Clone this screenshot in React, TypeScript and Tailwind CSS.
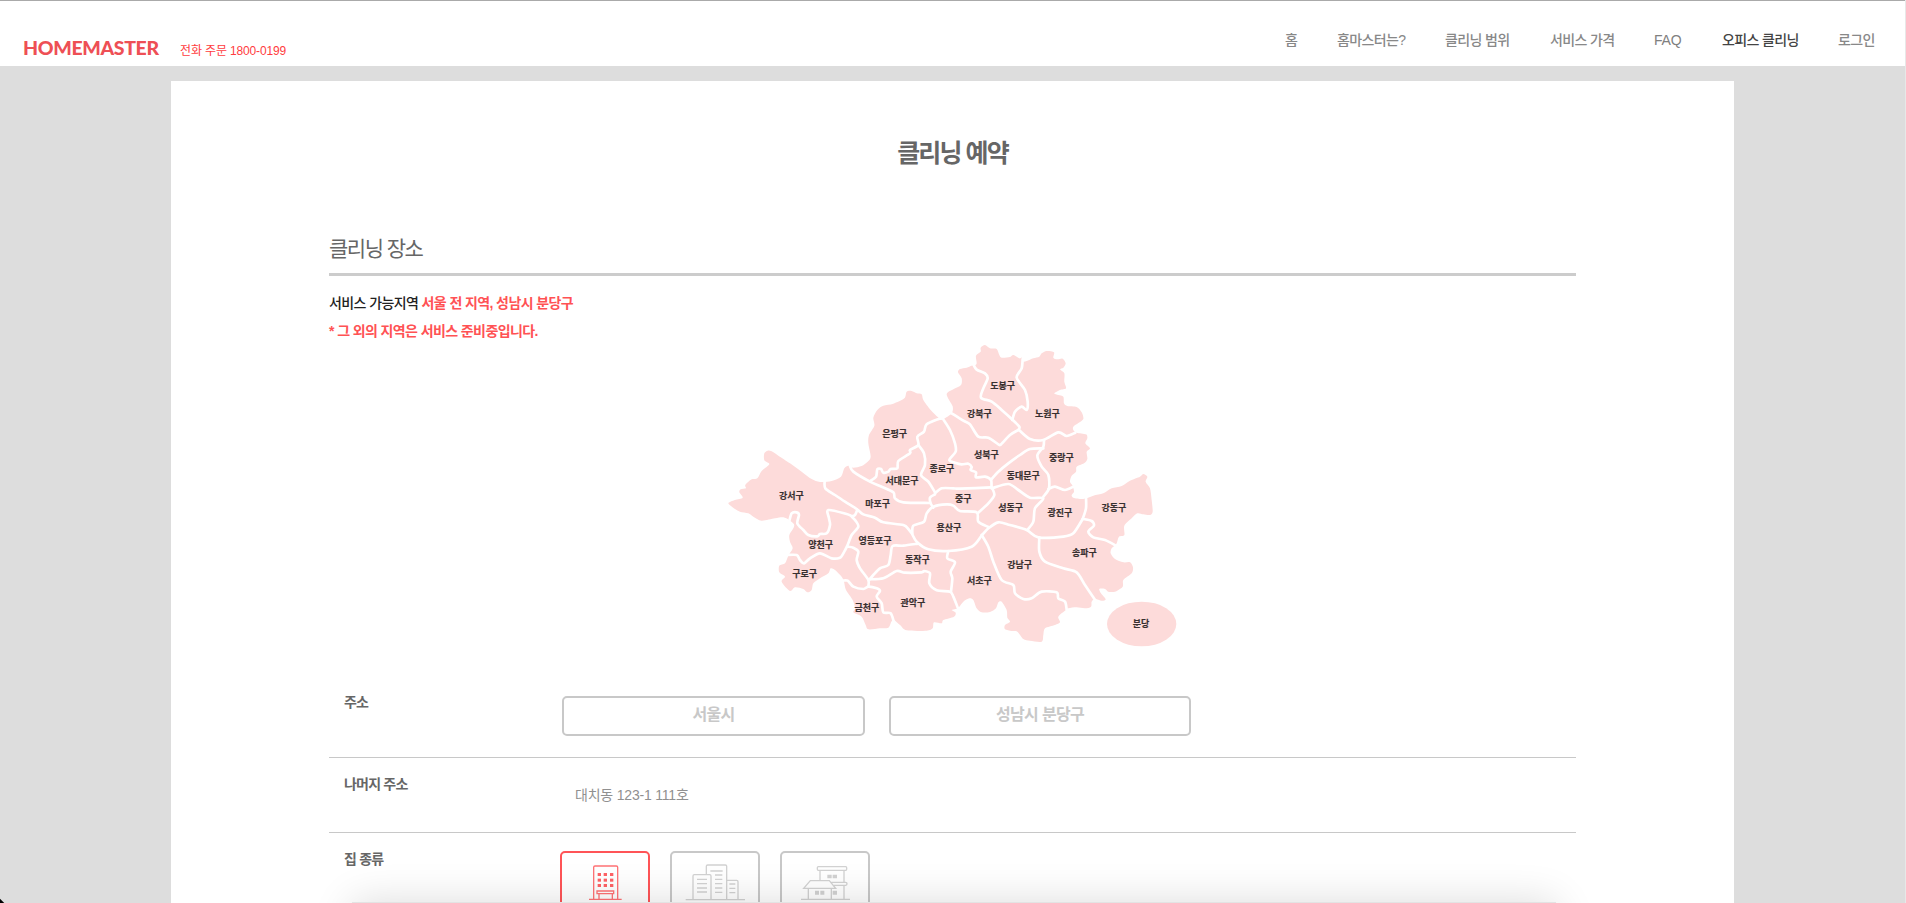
import React from "react";

type Pt = [number, number];

const parse = (s: string, dx = 0): Pt[] =>
  s.trim().split(/\s+/).map((p) => {
    const [x, y] = p.split(",").map(Number);
    return [x + dx, y];
  });

/* Catmull-Rom spline through every point */
function curve(pts: Pt[], closed = false): string {
  const n = pts.length;
  const at = (i: number) => (closed ? pts[(i + n) % n] : pts[Math.max(0, Math.min(n - 1, i))]);
  let d = `M${pts[0][0]} ${pts[0][1]}`;
  const last = closed ? n : n - 1;
  const k = 7;
  for (let i = 0; i < last; i++) {
    const a = at(i - 1), b = at(i), c = at(i + 1), e = at(i + 2);
    d += `C${b[0] + (c[0] - a[0]) / k} ${b[1] + (c[1] - a[1]) / k} ${c[0] - (e[0] - b[0]) / k} ${c[1] - (e[1] - b[1]) / k} ${c[0]} ${c[1]}`;
  }
  return closed ? d + "Z" : d;
}

const EAST = 630;

const outline: Pt[] = [
  ...parse(`25,505 45,495 68,488 58,472 62,463 78,460 76,450 95,433 112,430 125,408 148,388 133,376 133,355 143,347 155,349
  175,362 210,385 245,410 275,432 300,441 335,438 363,425 373,400 385,392 400,398 425,393 443,380 452,365 445,325 447,300
  463,272 460,248 472,225 490,212 520,206 553,190 560,170 575,168 590,175 605,178 610,195 632,225 654,247 664,254 675,250`),
  ...parse(`65,235 68,214 50,178 70,163 93,150 95,130 84,112 90,102 110,98 125,92 134,92 140,85 138,62 152,50 152,38 165,30
  180,40 200,42 208,60 215,68 240,66 250,60 268,70 276,68 280,80 290,78 310,70 328,65 335,55 350,48 372,52 370,68 382,73
  398,71 407,85 400,98 390,103 403,115 403,140 408,160 390,165 373,175 385,180 400,185 402,205 412,213 440,216 455,232
  460,252 445,264 430,275 430,285 440,293 468,298 472,310 466,325 480,340 470,350 472,372 462,385 440,395 438,410 425,422
  420,440 428,452 432,470 425,480 430,488 455,492 468,490 490,482 520,475 545,460 575,453 600,437 630,425 640,417 652,425
  647,440 660,460 665,495 668,530 660,540 640,538 622,535 605,550 583,572 583,600 567,605 560,625 553,633 545,640 542,655
  555,672 580,682 600,682 609,697 605,715 580,735 578,755 555,770 535,770 525,762 508,762 513,775 527,793 515,797 495,792
  485,800 483,815 465,820 440,817 415,820 408,825 385,845 390,862 375,870 345,880 340,900 335,920 300,917 280,912 262,890
  245,888 225,883 225,870 240,860 232,848 230,825 215,800 205,802 198,820 180,831 155,832 140,820 130,795 118,790 100,800
  88,815 80,821 65,825 77,833 72,845 40,855 35,865 12,862 8,880`, EAST),
  ...parse(`620,887 560,886 540,870 522,855 514,860 505,878 480,880 445,883 437,870 425,845 400,832 405,820 398,795 378,765
  372,740 365,725 345,705 332,700 325,715 300,730 280,745 275,765 262,772 250,762 225,757 210,768 185,740 195,725 178,712
  178,692 195,685 205,662 218,640 210,620 208,600 220,580 222,568 207,555 190,547 165,550 125,557 100,545 85,535 60,530 45,522`),
];

const borders: Pt[][] = [
  parse("314,438 316,460 345,480 375,500 410,522 430,538 465,548 490,562 550,570 565,582 575,595 590,620 625,643 685,648 755,635 785,602 805,580 835,562 870,570 920,585 955,607 1030,605 1060,595 1088,552"),
  parse("412,524 405,540 395,543 380,537 325,525 327,550 330,570 320,595 300,597 292,604 265,600 250,585 232,565 237,540 230,532 215,535 208,558"),
  parse("395,545 405,555 415,575 395,600 382,632 370,655 360,668 335,670 300,655 270,670 252,685 240,675 230,660 198,660"),
  parse("382,635 400,638 415,650 410,675 420,700 445,735 445,755"),
  parse("368,737 383,737 400,755 430,762 445,755 470,760 480,768 470,785 485,805 490,832 512,835 522,862"),
  parse("594,626 550,632 518,633 512,660 505,690 480,700 460,720 447,735"),
  parse("447,733 490,730 530,708 555,713 605,712 612,708 630,715 628,745 650,766 690,770 700,785 714,820"),
  parse("685,648 682,670 705,682 692,710 697,730 693,770"),
  parse("1088,552 1098,520 1098,486"),
  parse("460,552 485,558 492,572 475,590 490,607 525,615 558,632", EAST),
  parse("577,596 580,572 612,560 620,535 640,515 680,508 700,512 720,528 770,532 775,560 805,576"),
  parse("390,393 400,410 450,440 485,455 520,472 525,490 550,502 630,504"),
  parse("645,478 630,488 632,505 640,518"),
  parse("450,438 468,425 472,403 483,402 490,413 505,410 512,402 532,400 535,378 570,355 570,345 595,330 592,305 612,290 620,268 656,252 666,250"),
  parse("595,330 612,355 615,390 603,420 625,440 645,472"),
  parse("645,475 665,460 700,460 720,461 813,457"),
  parse("40,253 60,285 75,325 77,350 58,375 75,383 95,388 115,386 125,396 122,405 138,412 138,427 165,425 183,435 185,455 193,480 175,505 145,533", EAST),
  parse("65,235 100,257 120,268 145,305 175,308 205,328 213,328 240,300 265,285", EAST),
  parse("130,88 140,104 165,115 173,130 160,160 153,188 185,200 215,225 245,252 268,275 265,285", EAST),
  parse("278,72 275,100 260,128 285,165 293,200 290,225 275,215 255,230 247,255", EAST),
  parse("268,286 300,312 340,315 385,292 410,303 436,293", EAST),
  parse("342,315 340,335 322,362 335,395 355,420 357,460 340,485", EAST),
  parse("340,340 300,342 270,360 235,385 205,410 183,434", EAST),
  parse("185,460 235,447 265,465 300,488 340,490 315,520 310,560 292,585", EAST),
  parse("355,462 375,455 405,465 430,455", EAST),
  parse("328,608 328,650 345,680 400,700 440,712 465,750 497,797", EAST),
  parse("155,600 175,635 190,680 215,735 250,750 255,775 280,792 305,790 335,770 380,772 385,790 405,800 410,824", EAST),
];

const districts: [string, number, number][] = [
  ["도봉구", 848, 152], ["강북구", 778, 235], ["노원구", 982, 235], ["은평구", 524, 295], ["성북구", 799, 359],
  ["중랑구", 1024, 367], ["종로구", 666, 400], ["동대문구", 910, 422], ["서대문구", 546, 438], ["강서구", 214, 483],
  ["중구", 730, 491], ["마포구", 473, 507], ["성동구", 872, 519], ["강동구", 1182, 519], ["광진구", 1020, 532],
  ["용산구", 687, 579], ["영등포구", 465, 617], ["양천구", 302, 629], ["송파구", 1093, 654], ["동작구", 592, 675],
  ["강남구", 899, 689], ["구로구", 254, 717], ["서초구", 778, 737], ["관악구", 579, 803], ["금천구", 441, 817],
  ["분당", 1263, 866],
];

function DistrictMap() {
  return (
    <svg viewBox="0 0 1400 960" className="ml-[391px] block h-[320px] w-[466.67px]">
      <path d={curve(outline, true)} fill="#fddbda" />
      <g fill="none" stroke="#fff" strokeWidth="8" strokeLinejoin="round" strokeLinecap="round">
        {borders.map((b, i) => (
          <path key={i} d={curve(b)} />
        ))}
      </g>
      <ellipse cx="1265" cy="867" rx="104" ry="67" fill="#fddbda" />
      <g fill="#383030" stroke="#383030" strokeWidth="0.5" fontSize="27" fontWeight="700" textAnchor="middle">
        {districts.map(([name, x, y]) => (
          <text key={name} x={x} y={y + 10}>{name}</text>
        ))}
      </g>
    </svg>
  );
}

function ApartmentIcon() {
  return (
    <svg viewBox="786 549 258 156" className="block h-[52px] w-[86px]" fill="none" stroke="#ff7376" strokeWidth="4">
      <path d="M881 688V592q0-4 4-4h64q4 0 4 4v96M867 688h98M891 663h50v8h-50zM897 671v17M937 671v17" />
      <g fill="#ff6265" stroke="none">
        {[609, 626, 642].map((y) =>
          [893, 911, 930].map((x) => <rect key={`${x}-${y}`} x={x} y={y} width="10" height="9" />)
        )}
      </g>
    </svg>
  );
}

function OfficetelIcon() {
  return (
    <svg viewBox="1116 549 258 156" className="block h-[52px] w-[86px]" fill="none" stroke="#d2d2d2" strokeWidth="4">
      <path d="M1157 689h178M1179 688v-70q0-4 4-4h46q4 0 4 4v70M1219 612v-23q0-4 4-4h53q4 0 4 4v99M1282 631h28q4 0 4 4v53" />
      <path d="M1231 603h37M1245 615h22M1245 628h22M1245 641h22M1245 654h22M1245 667h22M1191 628h30M1191 641h30M1191 654h30M1191 666h30M1288 642h18M1288 655h18M1288 668h18" />
    </svg>
  );
}

function HouseIcon() {
  return (
    <svg viewBox="-54 549 258 156" className="block h-[52px] w-[86px]" fill="none" stroke="#d2d2d2" strokeWidth="4">
      <path d="M3 688h147M55 590h82q3 0 3 3v5q0 3-3 3H55q-3 0-3-3v-5q0-3 3-3zM60 602v30M132 602v34M11 655l20-23h57l19 23zM94 637h43q4 0 4 4t-4 5H102M25 656v32M94 656v32M132 648v40" />
      <g fill="#d2d2d2" stroke="none">
        <path d="M82 614h13v11H82zM98 614h13v11H98zM45 662h12v12H45zM61 662h12v12H61zM98 662h13v12H98z" />
      </g>
    </svg>
  );
}

const nav: { label: string; cls: string }[] = [
  { label: "홈", cls: "w-[52px] text-[#888]" },
  { label: "홈마스터는?", cls: "w-[108px] text-[#888]" },
  { label: "클리닝 범위", cls: "w-[105px] text-[#888]" },
  { label: "서비스 가격", cls: "w-[104px] text-[#888]" },
  { label: "FAQ", cls: "w-[68px] tracking-[-0.2px] text-[#808080]" },
  { label: "오피스 클리닝", cls: "w-[116px] text-[#444]" },
  { label: "로그인", cls: "w-[67px] text-[#888]" },
];

const houseTypes = [
  { Icon: ApartmentIcon, cls: "border-[#ff5457]" },
  { Icon: OfficetelIcon, cls: "border-[#c8c8c8]" },
  { Icon: HouseIcon, cls: "border-[#c8c8c8]" },
];

export default function App() {
  return (
    <div className="relative h-[903px] w-full overflow-hidden border-r border-[#e8e8e8] bg-[#ddd] font-['Liberation_Sans','Noto_Sans_CJK_KR',sans-serif]">
      <header className="flex h-[66px] justify-between border-t border-[#aaa] bg-white">
        <div className="flex pl-[23px]">
          <h1 className="mt-[34px] w-[157px] font-['Lato',sans-serif] text-[19.5px] leading-[26px] font-black tracking-[-0.35px] text-[#ee4f55]">HOMEMASTER</h1>
          <p className="mt-[41px] text-[12px] leading-[18px] tracking-[-0.14px] whitespace-nowrap text-[#ff3c40]">전화 주문 1800-0199</p>
        </div>
        <nav className="mt-[29px] flex text-[14px] leading-[20px] font-medium tracking-[-0.65px] whitespace-nowrap">
          {nav.map((n) => (
            <a key={n.label} className={n.cls}>{n.label}</a>
          ))}
        </nav>
      </header>

      <main className="mt-[15px] mr-[171px] ml-[171px] h-[860px] bg-white pr-[158px] pl-[158px]">
        <h2 className="pt-[52px] text-center text-[25px] leading-[40px] font-bold tracking-[-1.9px] text-[#666]">클리닝 예약</h2>
        <h3 className="mt-[58px] h-[45px] border-b-[3px] border-[#ccc] pt-px text-[21px] leading-[34px] tracking-[-1.5px] text-[#666]">클리닝 장소</h3>
        <div className="pt-[13px] text-[14px] leading-[28px] font-bold tracking-[-0.6px] text-[#ff5254]">
          <p><span className="font-medium text-[#222]">서비스 가능지역</span> 서울 전 지역, 성남시 분당구</p>
          <p>* 그 외의 지역은 서비스 준비중입니다.</p>
        </div>
        <div className="-mt-[10px]">
          <DistrictMap />
        </div>

        <div className="text-[14px] tracking-[-0.8px] text-[#666]">
          <div className="flex h-[103px] border-b border-[#c8c8c8] pt-[41px] pl-[15px]">
            <span className="-mt-px w-[218px] leading-[14px] font-bold">주소</span>
            <div className="flex h-[40px] gap-[24px] text-center text-[16px] leading-[32px] font-bold tracking-[-0.65px] text-[#c8c8c8]">
              <button className="w-[303px] rounded-[5px] border-2 border-[#c8c8c8] pb-[2px]">서울시</button>
              <button className="w-[302px] rounded-[5px] border-2 border-[#c8c8c8] pb-[2px]">성남시 분당구</button>
            </div>
          </div>
          <div className="flex h-[75px] border-b border-[#c8c8c8] pt-[16px] pl-[15px]">
            <span className="w-[231px] leading-[20px] font-bold">나머지 주소</span>
            <span className="pt-[11px] leading-[20px] tracking-[-0.2px] text-[#909090]">대치동 123-1 111호</span>
          </div>
          <div className="flex pt-[16px] pl-[15px]">
            <span className="w-[216px] leading-[20px] font-bold">집 종류</span>
            <div className="flex gap-[20px] pt-[2px]">
              {houseTypes.map(({ Icon, cls }, i) => (
                <div key={i} className={`h-[90px] w-[90px] rounded-[5px] border-2 ${cls}`}>
                  <Icon />
                </div>
              ))}
            </div>
          </div>
        </div>
      </main>

      <div className="absolute top-[902px] left-[352px] h-[80px] w-[1204px] bg-[#e3e3e3] shadow-[0_0_42px_rgba(0,0,0,0.14)]" />
      <div className="absolute bottom-[-3px] left-[-3px] h-[6px] w-[6px] rotate-45 bg-black" />
    </div>
  );
}
